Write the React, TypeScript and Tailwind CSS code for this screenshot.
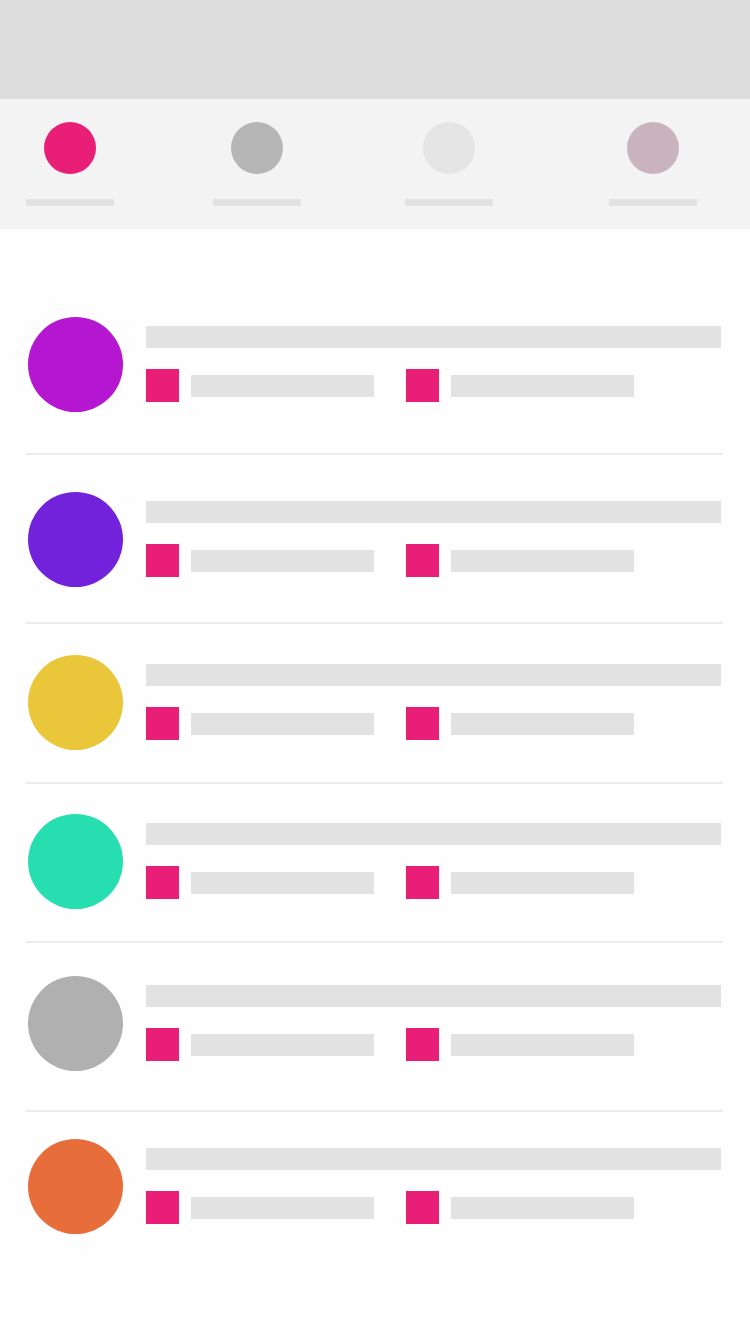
const tabs = [
  { name: "Tab 1", color: "bg-[#e91e77]" },
  { name: "Tab 2", color: "bg-[#b6b6b6]" },
  { name: "Tab 3", color: "bg-[#e5e5e5]" },
  { name: "Tab 4", color: "bg-[#c9b4bd]" },
];

const rows = [
  { color: "bg-[#b516cf]", spacing: "pt-[88px] pb-[41px]" },
  { color: "bg-[#7222da]", spacing: "pt-[37px] pb-[35px]" },
  { color: "bg-[#e9c63a]", spacing: "pt-[31px] pb-8" },
  { color: "bg-[#27deb1]", spacing: "pt-[30px] pb-8" },
  { color: "bg-[#b0b0b0]", spacing: "pt-[33px] pb-[39px]" },
  { color: "bg-[#e76d3b]", spacing: "pt-[27px] pb-[41px]" },
];

function Detail() {
  return (
    <div className="flex flex-1 items-center gap-3">
      <div className="size-[33px] shrink-0 bg-[#e91e77]" />
      <div className="h-[22px] flex-1 bg-[#e2e2e2]" />
    </div>
  );
}

function Row({ color, spacing }: { color: string; spacing: string }) {
  return (
    <li className={`flex gap-[23px] px-0.5 ${spacing}`}>
      <div className={`size-[95px] shrink-0 rounded-full ${color}`} />
      <div className="flex flex-1 flex-col gap-[21px] pt-[9px]">
        <div className="h-[22px] bg-[#e2e2e2]" />
        <div className="flex gap-8 pr-[87px]">
          <Detail />
          <Detail />
        </div>
      </div>
    </li>
  );
}

export default function App() {
  return (
    <div className="min-h-screen bg-[#fefefe] font-['Liberation_Sans',sans-serif]">
      <header className="h-[99px] bg-[#dddddd]" />
      <nav className="grid grid-cols-[187fr_192fr_204fr_88px] bg-[#f3f3f3] pt-[23px] pr-[53px] pb-[23px] pl-[26px]">
        {tabs.map((tab) => (
          <button
            key={tab.name}
            type="button"
            aria-label={tab.name}
            className="flex w-[88px] flex-col items-center gap-[25px]"
          >
            <span className={`size-[52px] rounded-full ${tab.color}`} />
            <span className="h-[7px] w-full bg-[#e2e2e2]" />
          </button>
        ))}
      </nav>
      <main className="pr-[27px] pl-[26px]">
        <ul className="divide-y-2 divide-[#ebebeb]">
          {rows.map((row) => (
            <Row key={row.color} color={row.color} spacing={row.spacing} />
          ))}
        </ul>
      </main>
    </div>
  );
}
